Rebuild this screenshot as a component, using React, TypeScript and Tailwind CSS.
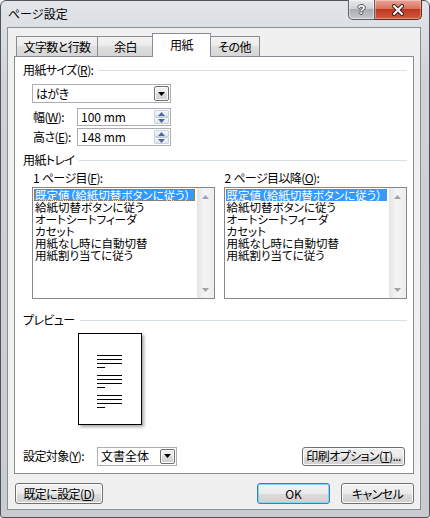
import type { ReactNode } from "react";

const trayItems = [
  "既定値（給紙切替ボタンに従う）",
  "給紙切替ボタンに従う",
  "オートシートフィーダ",
  "カセット",
  "用紙なし時に自動切替",
  "用紙割り当てに従う",
];

const btnFace =
  "bg-[linear-gradient(to_bottom,#f2f2f2_0%,#ebebeb_50%,#dddddd_50%,#cfcfcf_100%)]";

function U({ children }: { children: ReactNode }) {
  return <span className="underline underline-offset-[1px]">{children}</span>;
}

function GroupHeader({ children, className = "" }: { children: ReactNode; className?: string }) {
  return (
    <div className={`flex items-center h-[14px] ${className}`}>
      <span className="whitespace-nowrap">{children}</span>
      <div className="ml-[5px] flex-1 h-px bg-[#d5dfe5]" />
    </div>
  );
}

function Arrow({ dir = "down", color = "#000" }: { dir?: "up" | "down"; color?: string }) {
  return (
    <svg width="7" height="4" viewBox="0 0 7 4">
      <path d={dir === "down" ? "M0 0h7L3.5 4z" : "M0 4h7L3.5 0z"} fill={color} />
    </svg>
  );
}

function Combo({ value, className = "" }: { value: string; className?: string }) {
  return (
    <div className={`flex items-stretch border border-[#abadb3] bg-white ${className}`}>
      <span className="flex-1 flex items-center pl-[3px] whitespace-nowrap">{value}</span>
      <span
        className={`m-px w-[15px] flex items-center justify-center border border-[#707070] rounded-[2px] shadow-[inset_0_0_0_1px_#fcfcfc] ${btnFace}`}
      >
        <Arrow />
      </span>
    </div>
  );
}

function SpinHalf({ dir }: { dir: "up" | "down" }) {
  return (
    <div className="flex-1 flex items-center justify-center border border-[#c7d1dd] rounded-[1px] bg-[linear-gradient(to_bottom,#f5f8fb,#dfe7f0)]">
      <Arrow dir={dir} color="#4f6a9a" />
    </div>
  );
}

function Spin({ value }: { value: string }) {
  return (
    <div className="flex w-[94px] h-[18px] border border-[#abadb3] bg-white">
      <span className="flex-1 flex items-center pl-[3px] whitespace-nowrap tracking-normal">{value}</span>
      <div className="flex flex-col w-[15px] my-px mr-px">
        <SpinHalf dir="up" />
        <SpinHalf dir="down" />
      </div>
    </div>
  );
}

function ListBox({ focused = false }: { focused?: boolean }) {
  return (
    <div className="flex h-[112px] border border-[#828790] bg-white">
      <div className="flex-1 pt-px pl-px pr-[2px] overflow-hidden text-[11.5px] tracking-normal">
        {trayItems.map((t, i) => (
          <div
            key={t}
            className={`h-[12px] leading-[12px] pl-px whitespace-nowrap ${
              i === 0 ? "bg-[#3399ff] text-white" : ""
            } ${i === 0 && focused ? "outline outline-1 outline-dotted outline-[#cc6600] -outline-offset-1" : ""}`}
          >
            {t}
          </div>
        ))}
      </div>
      <div className="w-[17px] flex flex-col justify-between bg-[linear-gradient(to_right,#e4e4e4,#f4f4f4_45%,#ededed)]">
        <div className="h-[17px] flex items-center justify-center">
          <Arrow dir="up" color="#a3a3a3" />
        </div>
        <div className="h-[17px] flex items-center justify-center">
          <Arrow dir="down" color="#a3a3a3" />
        </div>
      </div>
    </div>
  );
}

function Btn({
  children,
  className = "",
  primary = false,
}: {
  children: ReactNode;
  className?: string;
  primary?: boolean;
}) {
  return (
    <div
      className={`flex items-center justify-center rounded-[3px] border whitespace-nowrap ${btnFace} ${
        primary
          ? "border-[#3c7fb1] shadow-[inset_0_0_0_1px_#7fd6fb]"
          : "border-[#707070] shadow-[inset_0_0_0_1px_#fcfcfc]"
      } ${className}`}
    >
      {children}
    </div>
  );
}

function Tab({
  children,
  width,
  selected = false,
}: {
  children: ReactNode;
  width: string;
  selected?: boolean;
}) {
  return selected ? (
    <div
      className={`relative z-10 -ml-[2px] -mb-px h-[24px] ${width} flex justify-center pt-[4px] bg-white border border-b-0 border-[#898c95]`}
    >
      {children}
    </div>
  ) : (
    <div
      className={`h-[20px] ${width} flex items-center justify-center border border-b-0 border-[#898c95] bg-[linear-gradient(to_bottom,#f3f3f3_0%,#ebebeb_50%,#dfdfdf_50%,#d6d6d6_100%)]`}
    >
      {children}
    </div>
  );
}

function PreviewPage() {
  return (
    <div className="ml-[55px] mt-[6px] w-[64px] h-[92px] border border-black bg-white shadow-[2px_2px_3px_rgba(0,0,0,0.35)] pt-[21px] pl-[18px]">
      {[0, 1, 2].map((g) => (
        <div key={g} className="flex flex-col gap-[3px] mb-[7px]">
          <div className="w-[25px] h-px bg-black" />
          <div className="w-[25px] h-px bg-black" />
          <div className="w-[25px] h-px bg-black" />
          <div className="w-[8px] h-px bg-black" />
        </div>
      ))}
    </div>
  );
}

export default function App() {
  return (
    <div className="w-[430px] h-[518px] bg-white text-[12px] leading-[14px] tracking-[-0.6px] text-black font-['Noto_Sans_CJK_JP','Noto_Sans_CJK_SC',sans-serif] [font-feature-settings:'palt']">
      <div className="w-[430px] h-[518px] flex flex-col pl-[6px] pr-[8px] pb-[7px] border border-[#50545a] rounded-t-[6px] rounded-b-[3px] bg-[linear-gradient(to_bottom,#e2e5e9,#cfd3d8_80px,#c8ccd1)]">
        {/* title bar */}
        <div className="h-[26px] flex items-center">
          <span className="pl-[1px] text-[12px] tracking-normal [font-feature-settings:normal]">ページ設定</span>
          <div className="ml-auto self-start -mt-px -mr-px flex">
            <div className="w-[27px] h-[20px] flex items-center justify-center rounded-bl-[5px] border border-t-0 border-[#5d6066] bg-[linear-gradient(to_bottom,#e9eaec_0%,#cfd1d4_45%,#a9adb2_50%,#c4c7cb_100%)] shadow-[inset_0_0_0_1px_rgba(255,255,255,0.45)]">
              <span className="text-white font-bold text-[13px] leading-none tracking-normal font-['Liberation_Sans',sans-serif] [text-shadow:-1px_0_#4a4d52,1px_0_#4a4d52,0_-1px_#4a4d52,0_1px_#4a4d52]">
                ?
              </span>
            </div>
            <div className="w-[47px] h-[20px] flex items-center justify-center rounded-br-[5px] border border-l-0 border-t-0 border-[#5d2a22] bg-[linear-gradient(to_bottom,#eaa596_0%,#d8735f_45%,#c2371f_50%,#d05a3f_100%)] shadow-[inset_0_0_0_1px_rgba(255,255,255,0.35)]">
              <svg width="14" height="12" viewBox="0 0 14 12">
                <path d="M3 2l8 8M11 2l-8 8" stroke="#3a2420" strokeWidth="4" strokeLinecap="round" />
                <path d="M3 2l8 8M11 2l-8 8" stroke="#ffffff" strokeWidth="2" strokeLinecap="round" />
              </svg>
            </div>
          </div>
        </div>

        {/* client area */}
        <div className="flex-1 flex flex-col border border-[#8a8f96] bg-[#f0f0f0]">
          {/* tabs */}
          <div className="mt-[4px] ml-[6px] h-[24px] flex items-end pl-[2px]">
            <Tab width="w-[82px]">文字数と行数</Tab>
            <div className="-ml-px">
              <Tab width="w-[57px]">余白</Tab>
            </div>
            <Tab width="w-[59px]" selected>
              用紙
            </Tab>
            <div className="-ml-[2px]">
              <Tab width="w-[51px]">その他</Tab>
            </div>
          </div>

          {/* tab panel */}
          <div className="relative ml-[6px] w-[400px] h-[418px] border border-[#898c95] bg-white pt-[6px] pl-[8px] pr-[6px] flex flex-col">
            <GroupHeader>
              用紙サイズ(<U>R</U>):
            </GroupHeader>
            <Combo value="はがき" className="mt-[7px] ml-[9px] w-[139px] h-[19px]" />
            <div className="mt-[5px] ml-[10px] flex items-center">
              <span className="w-[44px] whitespace-nowrap">
                幅(<U>W</U>):
              </span>
              <Spin value="100 mm" />
            </div>
            <div className="mt-[2px] ml-[10px] flex items-center">
              <span className="w-[44px] whitespace-nowrap">
                高さ(<U>E</U>):
              </span>
              <Spin value="148 mm" />
            </div>

            <GroupHeader className="mt-[7px]">用紙トレイ</GroupHeader>
            <div className="flex">
              <div className="ml-[9px] w-[183px] flex flex-col">
                <span className="mt-[4px] pl-px h-[14px] whitespace-nowrap">
                  1<span className="tracking-normal"> </span>ページ目(<U>F</U>):
                </span>
                <div className="mt-[2px]">
                  <ListBox focused />
                </div>
              </div>
              <div className="ml-[9px] w-[184px] flex flex-col">
                <span className="mt-[4px] pl-px h-[14px] whitespace-nowrap">
                  2<span className="tracking-normal"> </span>ページ目以降(<U>O</U>):
                </span>
                <div className="mt-[2px]">
                  <ListBox />
                </div>
              </div>
            </div>

            <GroupHeader className="mt-[14px]">プレビュー</GroupHeader>
            <PreviewPage />

            <div className="mt-[21px] h-[20px] flex items-center">
              <span className="w-[74px] whitespace-nowrap">
                設定対象(<U>Y</U>):
              </span>
              <Combo value="文書全体" className="w-[80px] h-[19px] tracking-normal [font-feature-settings:normal]" />
              <Btn className="ml-auto mr-[2px] w-[103px] h-[19px]">
                印刷オプション(<U>T</U>)...
              </Btn>
            </div>
          </div>

          {/* bottom buttons */}
          <div className="mt-[9px] ml-[7px] mr-[6px] flex">
            <Btn className="w-[88px] h-[21px]">
              既定に設定(<U>D</U>)
            </Btn>
            <Btn primary className="ml-auto w-[73px] h-[21px] tracking-normal">
              OK
            </Btn>
            <Btn className="ml-[11px] w-[73px] h-[21px]">キャンセル</Btn>
          </div>
        </div>
      </div>
    </div>
  );
}
